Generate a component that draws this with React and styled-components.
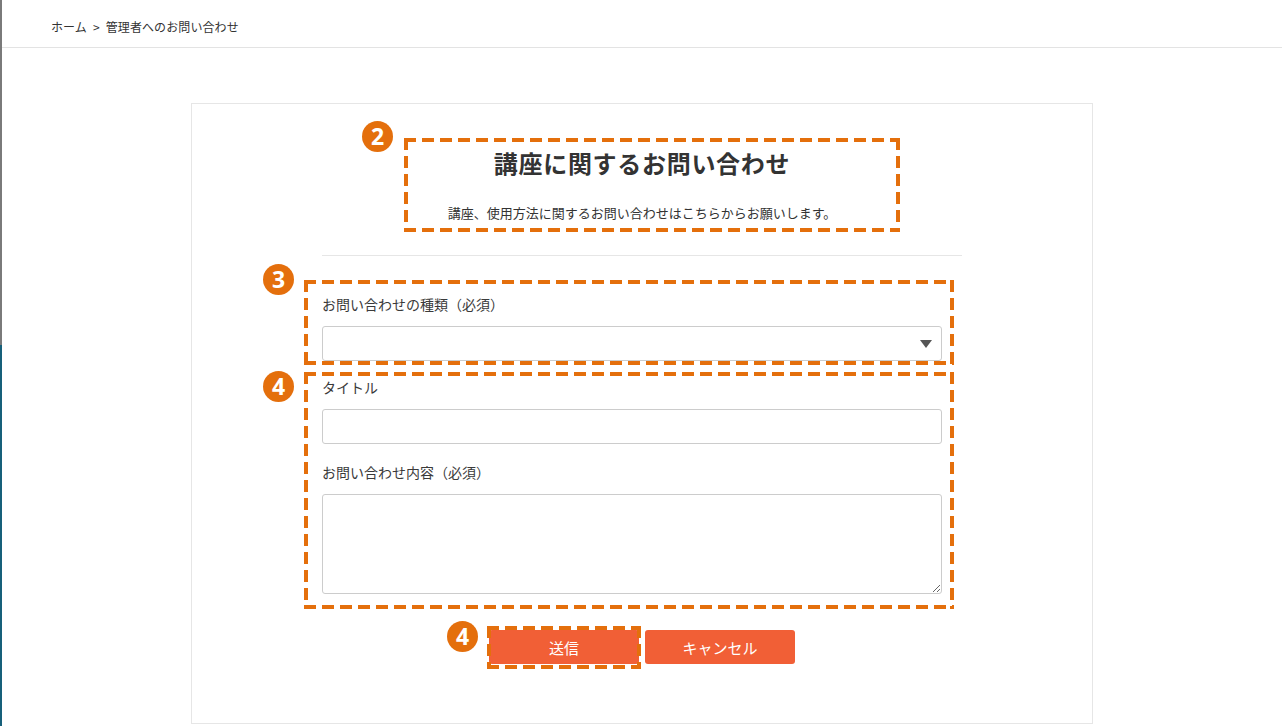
import React from 'react'
import styled, { createGlobalStyle } from 'styled-components'

const GlobalStyle = createGlobalStyle`
  html, body {
    margin: 0;
    padding: 0;
    background: #fff;
  }
  body {
    font-family: "Noto Sans CJK JP", "Noto Sans", sans-serif;
    color: #333;
    overflow: hidden;
  }
  * {
    box-sizing: border-box;
  }
`

const Page = styled.div`
  width: 1282px;
  height: 726px;
  position: relative;
  border-left: 2px solid transparent;
  border-image: linear-gradient(to bottom, #7a7a7a 0, #7a7a7a 345px, #17607a 345px, #17607a 100%) 1;
`

const Header = styled.div`
  height: 48px;
  border-bottom: 1px solid #e3e3e3;
  display: flex;
  align-items: flex-start;
  padding: 18px 0 0 49px;
  font-size: 12px;
  line-height: 18px;
  color: #333;
  gap: 6px;
`

const Crumb = styled.span`
  letter-spacing: 0.1px;
`

const Card = styled.div`
  position: relative;
  width: 902px;
  height: 621px;
  margin: 55px auto 0;
  border: 1px solid #e6e6e6;
  display: flex;
  flex-direction: column;
  align-items: center;
  padding-top: 39px;
`

const Intro = styled.div`
  width: 640px;
  display: flex;
  flex-direction: column;
  align-items: center;
  border-bottom: 1px solid #e6e6e6;
  padding-bottom: 33px;
`

const Title = styled.h1`
  margin: 0;
  font-size: 24px;
  font-weight: 700;
  line-height: 40px;
  letter-spacing: 0.7px;
  color: #333;
`

const Lead = styled.p`
  margin: 21px 0 0;
  font-size: 13px;
  line-height: 18px;
  color: #333;
`

const Form = styled.form`
  width: 640px;
  padding: 38px 20px 0 0;
  display: flex;
  flex-direction: column;
`

const Field = styled.div`
  display: flex;
  flex-direction: column;
  gap: 12px;
  margin-bottom: ${p => p.$gap}px;
`

const Label = styled.label`
  font-size: 14px;
  line-height: 20px;
  color: #3a3a3a;
`

const SelectWrap = styled.div`
  position: relative;
  height: 35px;
`

const Select = styled.select`
  appearance: none;
  width: 100%;
  height: 100%;
  border: 1px solid #cccccc;
  border-radius: 3px;
  background: #fff;
  font-family: inherit;
  font-size: 13px;
  padding: 0 10px;
  outline: none;
`

const Caret = styled.span`
  position: absolute;
  right: 10px;
  top: 14px;
  width: 0;
  height: 0;
  border-left: 6px solid transparent;
  border-right: 6px solid transparent;
  border-top: 8px solid #555;
  pointer-events: none;
`

const Input = styled.input`
  height: 35px;
  border: 1px solid #cccccc;
  border-radius: 3px;
  font-family: inherit;
  font-size: 13px;
  padding: 0 10px;
  outline: none;
`

const TextArea = styled.textarea`
  height: 100px;
  border: 1px solid #cccccc;
  border-radius: 3px;
  font-family: inherit;
  font-size: 13px;
  padding: 8px 10px;
  outline: none;
  resize: vertical;
`

const Buttons = styled.div`
  display: flex;
  justify-content: center;
  gap: 6px;
  margin-top: 36px;
  width: 640px;
`

const Button = styled.button`
  width: 150px;
  height: 34px;
  border: none;
  border-radius: 3px;
  background: #f15f36;
  color: #fff;
  font-family: inherit;
  font-size: 15px;
  cursor: pointer;
`

const dash = '#e46f0c'

const Frame = styled.div`
  position: absolute;
  left: ${p => p.$x}px;
  top: ${p => p.$y}px;
  width: ${p => p.$w}px;
  height: ${p => p.$h}px;
  pointer-events: none;
  background:
    linear-gradient(to right, ${dash} 12px, transparent 12px) left top / 18px 4px repeat-x,
    linear-gradient(to right, ${dash} 12px, transparent 12px) left bottom / 18px 4px repeat-x,
    linear-gradient(to bottom, ${dash} 12px, transparent 12px) left top / 4px 18px repeat-y,
    linear-gradient(to bottom, ${dash} 12px, transparent 12px) right top / 4px 18px repeat-y;
`

const Badge = styled.div`
  position: absolute;
  left: ${p => p.$x}px;
  top: ${p => p.$y}px;
  width: 31px;
  height: 31px;
  border-radius: 50%;
  background: ${dash};
  color: #fff;
  font-family: "Open Sans", "Noto Sans", sans-serif;
  font-weight: 700;
  font-size: 23px;
  display: flex;
  align-items: center;
  justify-content: center;
  line-height: 1;
  pointer-events: none;
`

export default () => {
  return (
    <Page>
      <GlobalStyle />
      <Header>
        <Crumb>ホーム</Crumb>
        <Crumb>&gt;</Crumb>
        <Crumb>管理者へのお問い合わせ</Crumb>
      </Header>
      <Card>
        <Intro>
          <Title>講座に関するお問い合わせ</Title>
          <Lead>講座、使用方法に関するお問い合わせはこちらからお願いします。</Lead>
        </Intro>
        <Form onSubmit={e => e.preventDefault()}>
          <Field $gap={16}>
            <Label>お問い合わせの種類（必須）</Label>
            <SelectWrap>
              <Select defaultValue="">
                <option value=""></option>
              </Select>
              <Caret />
            </SelectWrap>
          </Field>
          <Field $gap={18}>
            <Label>タイトル</Label>
            <Input type="text" />
          </Field>
          <Field $gap={0}>
            <Label>お問い合わせ内容（必須）</Label>
            <TextArea />
          </Field>
        </Form>
        <Buttons>
          <Button type="button">送信</Button>
          <Button type="button">キャンセル</Button>
        </Buttons>

        <Frame $x={212} $y={34} $w={496} $h={94} />
        <Badge $x={170} $y={17}>2</Badge>
        <Frame $x={112} $y={176} $w={650} $h={85} />
        <Badge $x={71} $y={160}>3</Badge>
        <Frame $x={112} $y={268} $w={650} $h={237} />
        <Badge $x={71} $y={267}>4</Badge>
        <Frame $x={295} $y={522} $w={154} $h={43} />
        <Badge $x={255} $y={517}>4</Badge>
      </Card>
    </Page>
  )
}
